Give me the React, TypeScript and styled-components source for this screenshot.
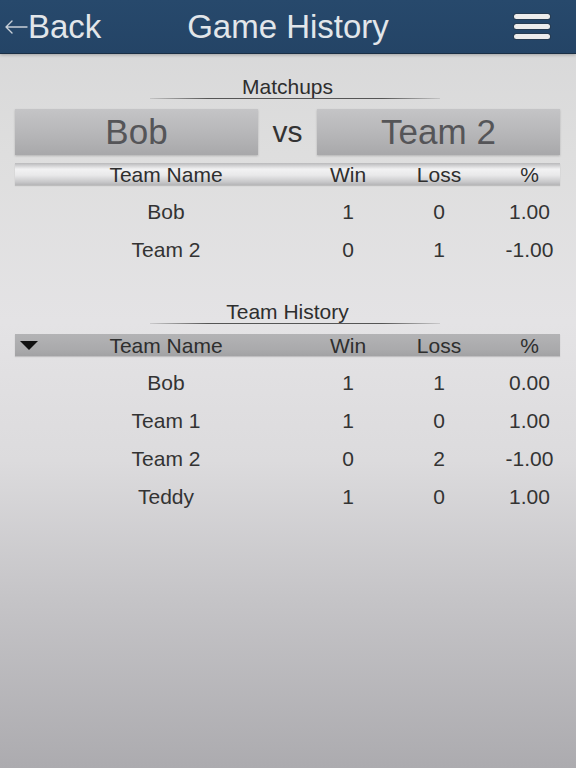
import React, { ReactElement } from "react";
import styled, { createGlobalStyle } from "styled-components";

const GlobalStyle = createGlobalStyle`
  html, body {
    margin: 0;
    padding: 0;
  }
  body {
    font-family: "Liberation Sans", Arial, sans-serif;
  }
`;

const Page = styled.div`
  width: 576px;
  min-height: 768px;
  display: flex;
  flex-direction: column;
  background: linear-gradient(
    180deg,
    #d6d6d7 0%,
    #dedede 20%,
    #e4e3e5 42%,
    #dcdbdd 60%,
    #c5c4c7 78%,
    #acabaf 100%
  );
`;

const TopBar = styled.header`
  height: 53px;
  display: flex;
  align-items: center;
  justify-content: space-between;
  padding: 0 26px 0 4px;
  background: linear-gradient(180deg, #27496c 0%, #244466 100%);
  border-bottom: 1px solid #1a2f45;
  box-shadow: 0 1px 3px rgba(0, 0, 0, 0.25);
  position: relative;
`;

const BackButton = styled.div`
  display: flex;
  align-items: center;
  color: #e2e6ea;
  font-size: 33px;
  width: 140px;
`;

const Title = styled.h1`
  margin: 0;
  font-weight: normal;
  font-size: 33px;
  color: #e2e6ea;
  position: absolute;
  left: 0;
  right: 0;
  text-align: center;
  pointer-events: none;
`;

const MenuButton = styled.div`
  display: flex;
  flex-direction: column;
  gap: 5px;
  width: 36px;
`;

const MenuBar = styled.span`
  display: block;
  height: 5px;
  border-radius: 3px;
  background: #ececec;
  box-shadow: 0 0 0 1px rgba(40, 40, 40, 0.35);
`;

const Content = styled.main`
  padding: 0 16px 0 15px;
  display: flex;
  flex-direction: column;
`;

/* the rule under a section title sits a little right of the text centre */
const SectionTitle = styled.div<{ $top: number }>`
  margin-top: ${(p) => p.$top}px;
  align-self: center;
  width: 304px;
  text-align: center;
  font-size: 21px;
  line-height: 22px;
  color: #2e2e2e;
  padding-bottom: 1px;
  background: linear-gradient(
      90deg,
      rgba(60, 60, 60, 0.15),
      #555 20%,
      #555 80%,
      rgba(60, 60, 60, 0.15)
    )
    14px 100% / 290px 1px no-repeat;
`;

const Versus = styled.div`
  margin-top: 10px;
  display: grid;
  grid-template-columns: 243px 1fr 243px;
  align-items: center;
`;

const TeamBox = styled.div`
  height: 46px;
  display: flex;
  align-items: center;
  justify-content: center;
  font-size: 35px;
  color: #555558;
  background: linear-gradient(180deg, #c4c4c6 0%, #b6b6b8 55%, #a8a8aa 100%);
  box-shadow: 0 1px 2px rgba(0, 0, 0, 0.2);
`;

const VsLabel = styled.div`
  text-align: center;
  font-size: 30px;
  color: #333;
`;

const columns = "302px 62px 120px 1fr";

const HeadRow = styled.div<{ $variant: "gloss" | "solid"; $top: number }>`
  margin-top: ${(p) => p.$top}px;
  height: 22px;
  display: grid;
  grid-template-columns: ${columns};
  align-items: center;
  font-size: 21px;
  color: #2e2e2e;
  position: relative;
  background: ${(p) =>
    p.$variant === "gloss"
      ? "linear-gradient(180deg, #b9b9bb 0%, #f2f2f3 28%, #e9e9ea 55%, #c9c9cb 85%, #b5b5b7 100%)"
      : "linear-gradient(180deg, #b3b3b5 0%, #aaaaac 70%, #a2a2a4 100%)"};
  box-shadow: 0 1px 1px rgba(0, 0, 0, 0.15);
`;

const Cell = styled.div`
  text-align: center;
  white-space: nowrap;
`;

const SortArrow = styled.span`
  position: absolute;
  left: 5px;
  top: 7px;
  width: 0;
  height: 0;
  border-left: 9px solid transparent;
  border-right: 9px solid transparent;
  border-top: 9px solid #111;
`;

const Rows = styled.div`
  margin-top: 8px;
  display: flex;
  flex-direction: column;
`;

const Row = styled.div`
  height: 38px;
  display: grid;
  grid-template-columns: ${columns};
  align-items: center;
  font-size: 21px;
  color: #333;
`;

type Record = { name: string; win: number; loss: number; pct: string };

const matchups: Record[] = [
  { name: "Bob", win: 1, loss: 0, pct: "1.00" },
  { name: "Team 2", win: 0, loss: 1, pct: "-1.00" },
];

const history: Record[] = [
  { name: "Bob", win: 1, loss: 1, pct: "0.00" },
  { name: "Team 1", win: 1, loss: 0, pct: "1.00" },
  { name: "Team 2", win: 0, loss: 2, pct: "-1.00" },
  { name: "Teddy", win: 1, loss: 0, pct: "1.00" },
];

function BackArrow(): ReactElement {
  return (
    <svg width="24" height="16" viewBox="0 0 24 16" fill="none">
      <path
        d="M23 8H2M8 2L2 8l6 6"
        stroke="#c9d0d8"
        strokeWidth="1.4"
        strokeLinecap="round"
        strokeLinejoin="round"
      />
    </svg>
  );
}

function RecordRows({ items }: { items: Record[] }): ReactElement {
  return (
    <Rows>
      {items.map((r) => (
        <Row key={r.name}>
          <Cell>{r.name}</Cell>
          <Cell>{r.win}</Cell>
          <Cell>{r.loss}</Cell>
          <Cell>{r.pct}</Cell>
        </Row>
      ))}
    </Rows>
  );
}

function HeadCells(): ReactElement {
  return (
    <>
      <Cell>Team Name</Cell>
      <Cell>Win</Cell>
      <Cell>Loss</Cell>
      <Cell>%</Cell>
    </>
  );
}

export default function App(): ReactElement {
  return (
    <Page>
      <GlobalStyle />
      <TopBar>
        <BackButton>
          <BackArrow />
          Back
        </BackButton>
        <Title>Game History</Title>
        <MenuButton>
          <MenuBar />
          <MenuBar />
          <MenuBar />
        </MenuButton>
      </TopBar>
      <Content>
        <SectionTitle $top={22}>Matchups</SectionTitle>
        <Versus>
          <TeamBox>Bob</TeamBox>
          <VsLabel>vs</VsLabel>
          <TeamBox>Team 2</TeamBox>
        </Versus>
        <HeadRow $variant="gloss" $top={8}>
          <HeadCells />
        </HeadRow>
        <RecordRows items={matchups} />

        <SectionTitle $top={32}>Team History</SectionTitle>
        <HeadRow $variant="solid" $top={10}>
          <SortArrow />
          <HeadCells />
        </HeadRow>
        <RecordRows items={history} />
      </Content>
    </Page>
  );
}
